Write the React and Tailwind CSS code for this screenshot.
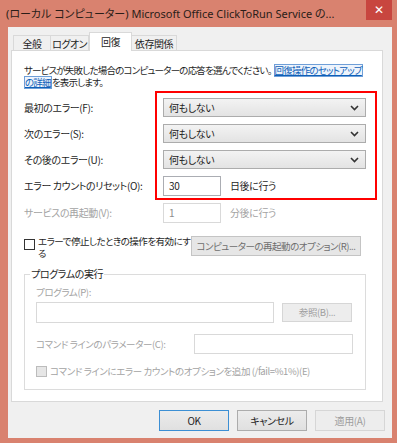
import React from "react";

const JP = "font-['Noto_Sans_CJK_JP',sans-serif] [font-feature-settings:'palt']";

function Chevron() {
  return (
    <svg width="9" height="6" viewBox="0 0 9 6" className="shrink-0">
      <path d="M1 1 L4.5 4.5 L8 1" fill="none" stroke="#333" strokeWidth="1.6" />
    </svg>
  );
}

function Select() {
  return (
    <div className="flex items-center justify-between w-[203px] h-[19px] border border-[#acacac] bg-gradient-to-b from-[#f3f3f3] to-[#e3e3e3] pl-[5px] pr-[6px] text-[#1e1e1e]">
      <span>何もしない</span>
      <Chevron />
    </div>
  );
}

function Row({ label, children, disabled, mt }) {
  return (
    <div className={`flex items-center h-[19px] ${mt}`}>
      <div className={`w-[139px] whitespace-nowrap ${disabled ? "text-[#a3a3a3]" : "text-[#1e1e1e]"}`}>{label}</div>
      {children}
    </div>
  );
}

const LINK = "inline-block leading-[11px] text-[#0d5fb8] underline border border-[#6f9fd8] bg-[#eef4fc]";

export default function App() {
  return (
    <div className={`relative w-[397px] h-[443px] overflow-hidden bg-[#d9826f] flex flex-col text-[10px] tracking-[-0.4px] ${JP}`}>
      {/* title bar */}
      <div className="h-[27px] flex items-start justify-between shrink-0">
        <div className="pl-[6px] pt-[5px] text-[11px] tracking-normal leading-[18px] text-[#2a1d18] whitespace-nowrap font-['Noto_Sans','Noto_Sans_CJK_JP',sans-serif]">
          (ローカル コンピューター) Microsoft Office ClickToRun Service の...
        </div>
        <div className="mr-[5px] w-[26px] h-[20px] shrink-0 bg-[#c8463f] flex items-center justify-center text-white text-[12px] tracking-normal leading-none font-['DejaVu_Sans',sans-serif]">
          ✕
        </div>
      </div>

      {/* client area */}
      <div className="flex-1 ml-[8px] mr-[5px] mb-[5px] bg-[#f0f0f0] flex flex-col">
        {/* tabs */}
        <div className="flex items-end h-[23px] pl-[5px] text-[#1e1e1e]">
          <div className="w-[38px] h-[15px] border border-b-0 border-[#d9d9d9] bg-[#f0f0f0] flex items-center justify-center">全般</div>
          <div className="w-[38px] h-[15px] border border-b-0 border-l-0 border-[#d9d9d9] bg-[#f0f0f0] flex items-center justify-center tracking-[-0.6px]">ログオン</div>
          <div className="relative z-10 -mb-px w-[43px] h-[19px] border border-b-0 border-[#d9d9d9] bg-white flex items-center justify-center pb-[2px]">回復</div>
          <div className="w-[45px] h-[15px] border border-b-0 border-l-0 border-[#d9d9d9] bg-[#f0f0f0] flex items-center justify-center">依存関係</div>
        </div>

        {/* panel */}
        <div className="ml-[3px] mr-[9px] h-[352px] bg-white border border-[#d9d9d9] flex flex-col pl-[12px]">
          <div className="mt-[13px] text-[9.5px] tracking-[-0.8px] text-[#1e1e1e] whitespace-nowrap">
            <div className="h-[12px] flex items-center">
              <span>サービスが失敗した場合のコンピューターの応答を選んでください。</span>
              <span className={`ml-[2px] ${LINK}`}>回復操作のセットアップ</span>
            </div>
            <div className="h-[12px] flex items-center">
              <span className={LINK}>の詳細</span>
              <span>を表示します。</span>
            </div>
          </div>

          <Row label="最初のエラー(F):" mt="mt-[10px]"><Select /></Row>
          <Row label="次のエラー(S):" mt="mt-[7px]"><Select /></Row>
          <Row label="その後のエラー(U):" mt="mt-[7px]"><Select /></Row>
          <Row label="エラー カウントのリセット(O):" mt="mt-[7px]">
            <div className="w-[58px] h-[20px] border border-[#abadb3] bg-white pl-[5px] flex items-center text-[#1e1e1e]">30</div>
            <div className="ml-[9px] text-[#1e1e1e]">日後に行う</div>
          </Row>
          <Row label="サービスの再起動(V):" disabled mt="mt-[8px]">
            <div className="w-[58px] h-[20px] border border-[#d9d9d9] bg-white pl-[5px] flex items-center text-[#8c8c8c]">1</div>
            <div className="ml-[9px] text-[#a3a3a3]">分後に行う</div>
          </Row>

          {/* checkbox row */}
          <div className="mt-[14px] flex items-start h-[22px]">
            <div className="mt-[3px] w-[11px] h-[11px] border border-[#333] bg-white shrink-0" />
            <div className="ml-[3px] w-[152px] text-[9.5px] tracking-[-0.5px] text-[#1e1e1e] whitespace-nowrap -mt-[1px]">
              <div className="h-[12px] leading-[12px]">エラーで停止したときの操作を有効にす</div>
              <div className="h-[12px] leading-[12px]">る</div>
            </div>
            <div className="ml-[1px] w-[170px] h-[20px] border border-[#c4c4c4] bg-[#e6e6e6] flex items-center justify-center text-[9.5px] tracking-[-0.5px] text-[#6e6e6e] whitespace-nowrap">
              コンピューターの再起動のオプション(R)...
            </div>
          </div>

          {/* group box */}
          <div className="relative mt-[16px] w-[342px] h-[116px] border border-[#dcdcdc] pl-[11px] flex flex-col text-[9.5px] tracking-[-0.4px]">
            <div className="absolute -top-[7px] left-[5px] bg-white px-[1px] leading-[12px] text-[10px] text-[#1e1e1e]">プログラムの実行</div>
            <div className="mt-[11px] leading-[12px] text-[#a3a3a3]">プログラム(P):</div>
            <div className="mt-[4px] flex items-center">
              <div className="w-[238px] h-[21px] border border-[#d9d9d9] bg-white" />
              <div className="ml-[8px] w-[70px] h-[19px] border border-[#d6d6d6] bg-[#ededed] flex items-center justify-center text-[#9d9d9d]">参照(B)...</div>
            </div>
            <div className="mt-[11px] flex items-center">
              <div className="w-[158px] text-[#a3a3a3] whitespace-nowrap">コマンド ラインのパラメーター(C):</div>
              <div className="w-[159px] h-[20px] border border-[#d9d9d9] bg-white" />
            </div>
            <div className="mt-[10px] flex items-center">
              <div className="w-[11px] h-[11px] border border-[#bcbcbc] bg-[#e6e6e6] shrink-0" />
              <div className="ml-[3px] text-[#a3a3a3] whitespace-nowrap">コマンド ラインにエラー カウントのオプションを追加 (/fail=%1%)(E)</div>
            </div>
          </div>
        </div>

        {/* buttons */}
        <div className="mt-[8px] flex justify-end gap-[8px] mr-[7px]">
          <div className="w-[70px] h-[21px] border border-[#3c8fd4] bg-gradient-to-b from-[#ececec] to-[#e0e0e0] flex items-center justify-center text-[#1e1e1e]">OK</div>
          <div className="w-[70px] h-[21px] border border-[#acacac] bg-gradient-to-b from-[#ececec] to-[#e0e0e0] flex items-center justify-center text-[#1e1e1e]">キャンセル</div>
          <div className="w-[70px] h-[21px] border border-[#d6d6d6] bg-[#ededed] flex items-center justify-center text-[#9d9d9d]">適用(A)</div>
        </div>
      </div>

      {/* red annotation box */}
      <div className="absolute left-[155px] top-[91px] w-[222px] h-[109px] border-2 border-[#ff0000] pointer-events-none" />
    </div>
  );
}
